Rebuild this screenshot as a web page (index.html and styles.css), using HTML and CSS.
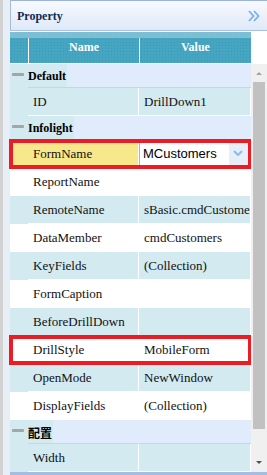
FILE: index.html
```html
<!DOCTYPE html>
<html lang="en">
<head>
  <meta charset="UTF-8">
  <title>Property</title>
  <link rel="stylesheet" href="styles.css">
</head>
<body>
  <div class="page">
    <div class="side"></div>

    <div class="panel">
      <div class="panel-head">
        <span class="panel-title">Property</span>
        <svg class="collapse" viewBox="0 0 12 12" width="12" height="12">
          <path d="M1 1 L5.5 6 L1 11 M6 1 L10.5 6 L6 11" fill="none" stroke="#74b3f0" stroke-width="1.8"/>
        </svg>
      </div>

      <div class="grid-head">
        <div class="hc hc-gut"></div>
        <div class="hc">Name</div>
        <div class="hc hc-last">Value</div>
      </div>

      <div class="grid-body">
        <div class="rows">
          <div class="group">
            <div class="gut"><i class="minus"></i></div>
            <div class="group-cell"><span class="group-label">Default</span></div>
          </div>
          <div class="row alt">
            <div class="gut"></div><div class="name">ID</div><div class="val">DrillDown1</div>
          </div>

          <div class="group">
            <div class="gut"><i class="minus"></i></div>
            <div class="group-cell"><span class="group-label">Infolight</span></div>
          </div>
          <div class="row selected marked">
            <div class="gut"></div><div class="name">FormName</div>
            <div class="val">
              <div class="editor">
                <span class="editor-text">MCustomers</span>
                <span class="drop">
                  <svg viewBox="0 0 10 6" width="10" height="6">
                    <path d="M1 1 L5 5 L9 1" fill="none" stroke="#86bdf0" stroke-width="2"/>
                  </svg>
                </span>
              </div>
            </div>
          </div>
          <div class="row">
            <div class="gut"></div><div class="name">ReportName</div><div class="val"></div>
          </div>
          <div class="row alt">
            <div class="gut"></div><div class="name">RemoteName</div><div class="val">sBasic.cmdCustomers</div>
          </div>
          <div class="row">
            <div class="gut"></div><div class="name">DataMember</div><div class="val">cmdCustomers</div>
          </div>
          <div class="row alt">
            <div class="gut"></div><div class="name">KeyFields</div><div class="val">(Collection)</div>
          </div>
          <div class="row">
            <div class="gut"></div><div class="name">FormCaption</div><div class="val"></div>
          </div>
          <div class="row alt">
            <div class="gut"></div><div class="name">BeforeDrillDown</div><div class="val"></div>
          </div>
          <div class="row marked">
            <div class="gut"></div><div class="name">DrillStyle</div><div class="val">MobileForm</div>
          </div>
          <div class="row alt">
            <div class="gut"></div><div class="name">OpenMode</div><div class="val">NewWindow</div>
          </div>
          <div class="row">
            <div class="gut"></div><div class="name">DisplayFields</div><div class="val">(Collection)</div>
          </div>

          <div class="group">
            <div class="gut"><i class="minus"></i></div>
            <div class="group-cell"><span class="group-label">配置</span></div>
          </div>
          <div class="row alt">
            <div class="gut"></div><div class="name">Width</div><div class="val"></div>
          </div>
        </div>

        <div class="scrollbar">
          <span class="arrow-up"></span>
          <span class="thumb"></span>
          <span class="arrow-down"></span>
        </div>
      </div>
    </div>
  </div>
</body>
</html>
```

FILE: styles.css
```css
:root {
  --cyan: #d3eaf1;
  --group: #e0ecfc;
  --teal: #46a6c2;
  --teal-light: #7cbfd3;
  --frame: #a6bde3;
  --mark: #ec1c24;
  --text: #111111;
}

* {
  margin: 0;
  padding: 0;
  box-sizing: border-box;
}

body {
  width: 267px;
  height: 475px;
  overflow: hidden;
  background: #fff;
  font-family: "Liberation Serif", "Noto Sans CJK SC", serif;
  color: var(--text);
}

.page {
  display: flex;
  height: 475px;
}

.side {
  width: 10px;
  flex: none;
  background: linear-gradient(to right, #d2d2d2 0 3px, #e8eef6 3px);
}

.panel {
  flex: 1;
  min-width: 0;
  display: flex;
  flex-direction: column;
}

/* title bar */
.panel-head {
  height: 31px;
  display: flex;
  align-items: center;
  justify-content: space-between;
  padding: 1px 7px 0 6px;
  border-top: 1px solid #9db4dc;
  border-bottom: 1px solid #a9bfe6;
  border-left: 1px solid #a4bbe2;
  background: linear-gradient(#f7f9fe, #e0e9f8);
}

.panel-title {
  font-size: 12px;
  font-weight: bold;
  color: #102a55;
}

.collapse {
  display: block;
}

/* column header */
.grid-head {
  display: flex;
  width: 241px;
  margin-top: 1px;
  padding-top: 6px;
  background: var(--teal-light);
  border-bottom: 1px solid #fff;
}

.hc {
  width: 111px;
  height: 25px;
  padding-bottom: 6px;
  display: flex;
  align-items: center;
  justify-content: center;
  border-right: 1px solid #fff;
  background-color: var(--teal);
  background-image: radial-gradient(circle, rgba(20, 90, 120, 0.18) 0.7px, transparent 0.9px);
  background-size: 3px 3px;
  color: #fff;
  font-size: 12px;
  font-weight: bold;
}

.hc-gut {
  width: 19px;
}

.hc-last {
  border-right: none;
}

/* body */
.grid-body {
  display: flex;
  height: 411px;
  border-bottom: 3px solid var(--frame);
}

.rows {
  width: 241px;
  flex: none;
}

.group {
  display: grid;
  grid-template-columns: 18px 1fr;
  height: 24px;
}

.group .gut {
  background: var(--cyan);
}

.minus {
  display: block;
  width: 12px;
  height: 3px;
  margin: 9px 0 0 2px;
  background: #a5a5a5;
  border-radius: 1px;
}

.group-cell {
  display: flex;
  background: var(--group);
  border-bottom: 1px solid #d3d3d3;
}

.group-label {
  display: flex;
  align-items: center;
  padding: 2px 1px 0 0;
  background: var(--cyan);
  font-size: 12px;
  font-weight: bold;
  color: #000;
}

.row {
  display: grid;
  grid-template-columns: 18px 111px 112px;
  height: 28px;
  background: #fff;
}

.row.alt {
  background: var(--cyan);
}

.row .name,
.row .val {
  padding: 1px 0 0 5px;
  line-height: 26px;
  font-size: 13px;
  white-space: nowrap;
  overflow: hidden;
  border-right: 1px solid #fff;
  border-bottom: 1px solid #fff;
}

.row.marked {
  outline: 4px solid var(--mark);
  outline-offset: -3px;
}

.row.selected .gut,
.row.selected .name {
  background: #f8e88c;
}

.row.selected .val {
  padding: 0;
  background: #fff;
}

.editor {
  display: flex;
  align-items: center;
  height: 100%;
  border-left: 1px solid #8fbbe6;
}

.editor-text {
  padding: 1px 0 0 3px;
  font-family: "Liberation Sans", Arial, sans-serif;
  font-size: 13px;
  color: #000;
}

.drop {
  width: 21px;
  height: 100%;
  margin-left: auto;
  display: flex;
  align-items: center;
  padding: 0 0 1px 4px;
  background: #e7eef8;
}

.drop svg {
  display: block;
}

/* scrollbar */
.scrollbar {
  flex: 1;
  display: flex;
  flex-direction: column;
  align-items: center;
  padding-top: 8px;
  background: #f0f0f0;
}

.arrow-up {
  width: 0;
  height: 0;
  border-left: 3px solid transparent;
  border-right: 3px solid transparent;
  border-bottom: 3px solid #a3a3a3;
}

.thumb {
  width: 12px;
  height: 347px;
  margin-top: 7px;
  background: #c1c1c1;
}

.arrow-down {
  width: 0;
  height: 0;
  margin-top: 32px;
  border-left: 3px solid transparent;
  border-right: 3px solid transparent;
  border-top: 3px solid #505050;
}
```
